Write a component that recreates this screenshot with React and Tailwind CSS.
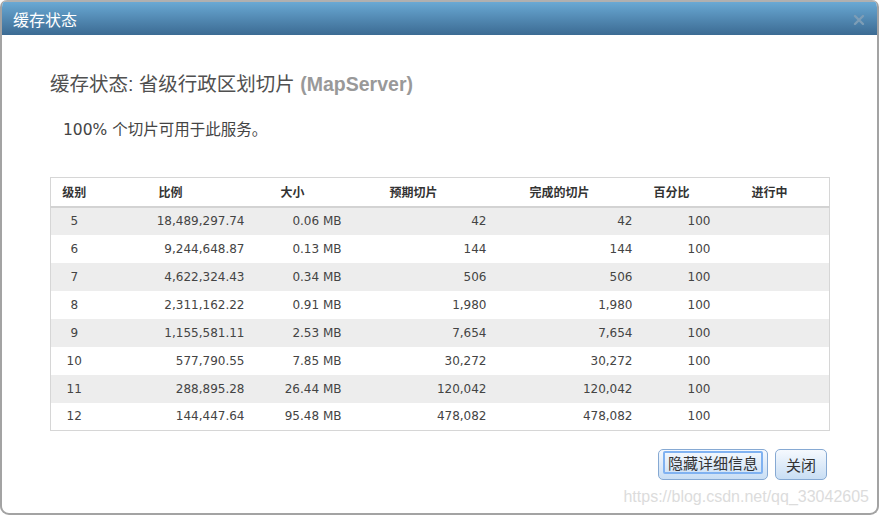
import React from "react";

const rows = [
  ["5", "18,489,297.74", "0.06 MB", "42", "42", "100"],
  ["6", "9,244,648.87", "0.13 MB", "144", "144", "100"],
  ["7", "4,622,324.43", "0.34 MB", "506", "506", "100"],
  ["8", "2,311,162.22", "0.91 MB", "1,980", "1,980", "100"],
  ["9", "1,155,581.11", "2.53 MB", "7,654", "7,654", "100"],
  ["10", "577,790.55", "7.85 MB", "30,272", "30,272", "100"],
  ["11", "288,895.28", "26.44 MB", "120,042", "120,042", "100"],
  ["12", "144,447.64", "95.48 MB", "478,082", "478,082", "100"],
];

const cjk = "font-['Noto_Sans_CJK_SC',sans-serif]";
const num = "font-['DejaVu_Sans','Noto_Sans_CJK_SC',sans-serif]";

const App = () => {
  return (
    <div className="w-[879px] h-[516px] bg-white relative overflow-hidden">
      <div className="w-[879px] h-[515px] border-2 border-t-0 border-[#a3a3a3] rounded-t-[7px] rounded-b-[9px] flex flex-col overflow-hidden">
        {/* title bar */}
        <div className="h-[35px] shrink-0 bg-gradient-to-b from-[#6aa9d4] to-[#3c6b93] border-t-2 border-[#b0b0b0] flex items-center justify-between pl-[11px] pr-[12px]">
          <span className={`${cjk} text-[16px] text-white leading-none`}>缓存状态</span>
          <svg width="12" height="12" viewBox="0 0 12 12" className="mt-[3px]">
            <path d="M2 2 L10 10 M10 2 L2 10" stroke="#7d9db6" strokeWidth="2.4" strokeLinecap="round" />
          </svg>
        </div>

        <div className="pl-[48px] pr-[47px] flex flex-col">
          <h1 className="mt-[37px] h-[24px] leading-[24px] text-[19.5px] text-[#505050] font-['Liberation_Sans','Noto_Sans_CJK_SC',sans-serif] whitespace-nowrap">
            缓存状态: 省级行政区划切片{" "}
            <span className="font-bold text-[#999999]">(MapServer)</span>
          </h1>

          <p className={`mt-[22px] ml-[13px] h-[20px] leading-[20px] text-[15.5px] text-[#444] ${num}`}>
            100% <span className={cjk}>个切片可用于此服务。</span>
          </p>

          <table className="mt-[39px] w-[780px] table-fixed border-collapse border border-[#d6d6d6] text-[#444]">
            <colgroup>
              <col className="w-[47px]" />
              <col className="w-[157px]" />
              <col className="w-[97px]" />
              <col className="w-[145px]" />
              <col className="w-[146px]" />
              <col className="w-[78px]" />
              <col />
            </colgroup>
            <thead>
              <tr className={`h-[29px] border-b-2 border-[#d3d3d3] text-[12px] font-bold text-[#333] ${cjk}`}>
                <th className="text-center font-bold">级别</th>
                <th className="text-left pl-[61px] font-bold">比例</th>
                <th className="text-left pl-[26px] font-bold">大小</th>
                <th className="text-left pl-[38px] font-bold">预期切片</th>
                <th className="text-left pl-[33px] font-bold">完成的切片</th>
                <th className="text-left pl-[11px] font-bold">百分比</th>
                <th className="text-left pl-[31px] font-bold">进行中</th>
              </tr>
            </thead>
            <tbody className={`${num} text-[12px]`}>
              {rows.map((r, i) => (
                <tr key={i} className={`h-[28px] ${i % 2 === 0 ? "bg-[#ededed]" : "bg-white"}`}>
                  <td className="text-center">{r[0]}</td>
                  <td className="text-right pr-[10px]">{r[1]}</td>
                  <td className="text-right pr-[10px]">{r[2]}</td>
                  <td className="text-right pr-[10px]">{r[3]}</td>
                  <td className="text-right pr-[10px]">{r[4]}</td>
                  <td className="text-right pr-[10px]">{r[5]}</td>
                  <td></td>
                </tr>
              ))}
            </tbody>
          </table>

          <div className="mt-[18px] flex justify-end gap-[7px] pr-[3px]">
            <button className="w-[110px] h-[31px] rounded-[5px] border border-[#86a9d3] bg-gradient-to-b from-[#f5f9fe] to-[#c9def4] flex items-start justify-center pt-[1px]">
              <span className={`h-[23px] px-[3px] border-2 border-[#80b2f1] rounded-[2px] ${cjk} text-[15px] leading-[19px] text-[#333]`}>
                隐藏详细信息
              </span>
            </button>
            <button className={`w-[52px] h-[31px] rounded-[5px] border border-[#86a9d3] bg-gradient-to-b from-[#f5f9fe] to-[#c9def4] ${cjk} text-[15px] leading-[28px] text-[#333]`}>
              关闭
            </button>
          </div>
        </div>
      </div>
      <div className="absolute right-[10px] top-[487px] text-[16px] leading-[20px] text-[#dcdcdc] font-['Liberation_Sans',sans-serif]">
        https://blog.csdn.net/qq_33042605
      </div>
    </div>
  );
};

export default App;
